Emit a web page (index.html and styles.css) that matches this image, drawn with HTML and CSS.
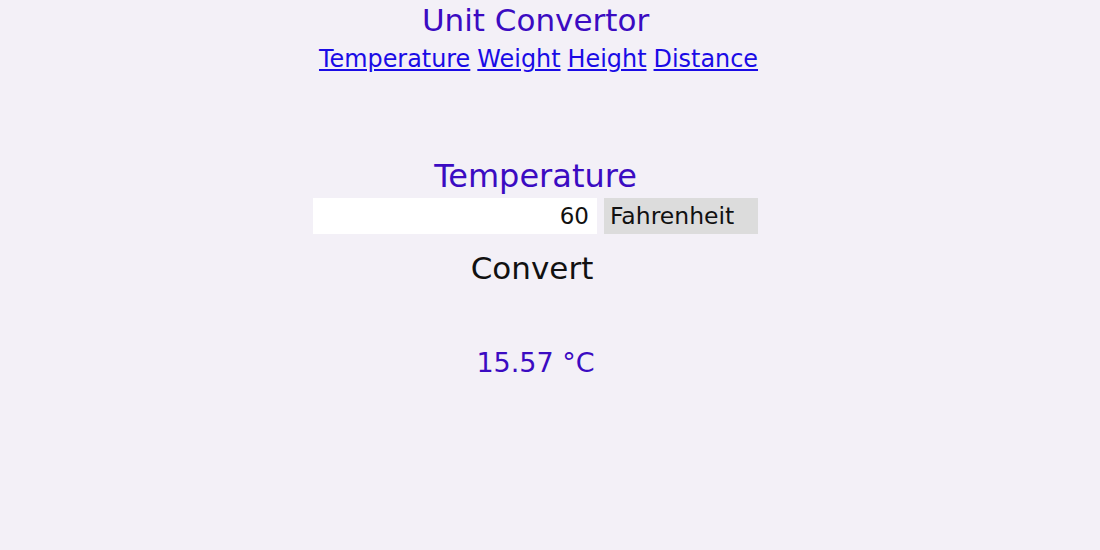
FILE: index.html
```html
<!DOCTYPE html>
<html>
<head>
<meta charset="utf-8">
<title>Unit Convertor</title>
<link rel="stylesheet" href="styles.css">
</head>
<body>
<div class="app">
  <h1 class="title">Unit Convertor</h1>
  <nav class="nav">
    <a href="#">Temperature</a>
    <a href="#">Weight</a>
    <a href="#">Height</a>
    <a href="#">Distance</a>
  </nav>
  <section class="converter">
    <h2 class="heading">Temperature</h2>
    <div class="row">
      <input class="value" type="text" value="60">
      <div class="unit">Fahrenheit</div>
    </div>
    <button class="convert">Convert</button>
    <div class="result">15.57 °C</div>
  </section>
</div>
</body>
</html>
```
FILE: styles.css
```css
html, body {
  margin: 0;
  padding: 0;
  background: #f3f0f7;
  font-family: "DejaVu Sans", sans-serif;
}
.app {
  width: 1071px;
  display: flex;
  flex-direction: column;
  align-items: center;
  text-align: center;
}
.title {
  margin: 0;
  padding-top: 2px;
  font-size: 31px;
  font-weight: normal;
  line-height: 36px;
  color: #3b0bc2;
}
.nav {
  display: flex;
  gap: 7px;
  margin-top: 5px;
  padding-left: 6px;
  font-size: 23.9px;
  line-height: 32px;
}
.nav a {
  color: #1a0be6;
}
.converter {
  display: flex;
  flex-direction: column;
  align-items: center;
  margin-top: 81px;
}
.heading {
  margin: 0;
  font-size: 32px;
  font-weight: normal;
  line-height: 40px;
  color: #3b0bc2;
}
.row {
  display: flex;
  gap: 7px;
  margin-top: 2px;
}
.value {
  width: 284px;
  height: 36px;
  box-sizing: border-box;
  border: none;
  background: #fff;
  text-align: right;
  padding: 0 8px;
  font-family: inherit;
  font-size: 23px;
  color: #111;
  outline: none;
}
.unit {
  width: 154px;
  height: 36px;
  box-sizing: border-box;
  background: #dcdcdc;
  text-align: left;
  padding-left: 6px;
  font-size: 23.5px;
  line-height: 36px;
  color: #111;
}
.convert {
  margin-top: 14px;
  border: none;
  background: none;
  font-family: inherit;
  font-size: 31px;
  line-height: 40px;
  color: #111;
  padding: 0;
  margin-right: 7px;
}
.result {
  margin-top: 55px;
  font-size: 27px;
  line-height: 40px;
  color: #3b0bc2;
}
```
